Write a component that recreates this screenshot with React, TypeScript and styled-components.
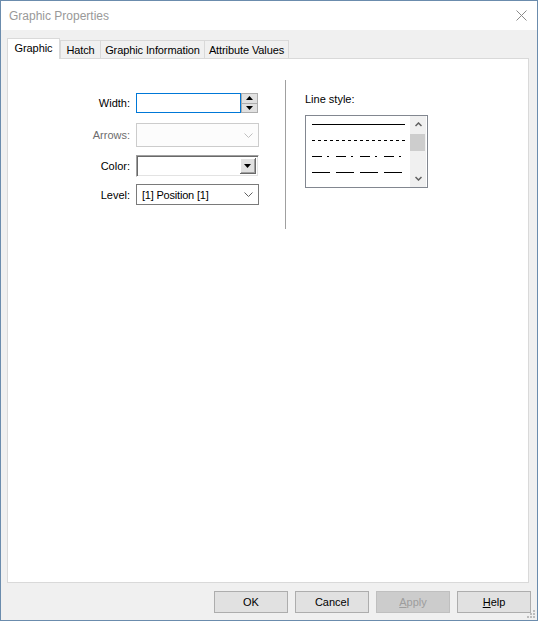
import styled, { createGlobalStyle } from 'styled-components';

const GlobalStyle = createGlobalStyle`
  body {
    margin: 0;
    background: #ffffff;
  }
`;

const Window = styled.div`
  position: relative;
  width: 538px;
  height: 621px;
  box-sizing: border-box;
  border: 1px solid #6b8cad;
  display: flex;
  flex-direction: column;
  background: #f0f0f0;
  font-family: 'Liberation Sans', Arial, sans-serif;
  font-size: 11px;
  color: #000;
`;

const TitleBar = styled.div`
  height: 29px;
  flex-shrink: 0;
  background: #ffffff;
  display: flex;
  align-items: center;
  justify-content: space-between;
  padding: 0 10px 0 8px;
  color: #999999;
  font-size: 12px;
`;

const CloseIcon = styled.svg`
  width: 11px;
  height: 11px;
`;

const Body = styled.div`
  flex: 1;
  display: flex;
  flex-direction: column;
  padding: 7px 6px 7px 6px;
`;

const TabRow = styled.div`
  display: flex;
  align-items: flex-end;
  height: 22px;
  margin-bottom: -1px;
  position: relative;
  z-index: 1;
`;

const Tab = styled.div<{ $active?: boolean; $width: number }>`
  box-sizing: border-box;
  width: ${(p) => p.$width}px;
  height: ${(p) => (p.$active ? 21 : 18)}px;
  margin-bottom: ${(p) => (p.$active ? 0 : 1)}px;
  margin-left: -1px;
  border: 1px solid #d9d9d9;
  border-bottom: none;
  background: ${(p) => (p.$active ? '#ffffff' : '#f0f0f0')};
  display: flex;
  align-items: center;
  justify-content: center;
  padding-bottom: ${(p) => (p.$active ? 3 : 0)}px;
  letter-spacing: -0.1px;

  &:first-child {
    margin-left: 0;
    margin-right: 1px;
  }
`;

const Panel = styled.div`
  height: 525px;
  box-sizing: border-box;
  margin-right: 2px;
  background: #ffffff;
  border: 1px solid #d9d9d9;
  display: flex;
  align-items: flex-start;
  padding-top: 21px;
`;

const LeftCol = styled.div`
  width: 277px;
  padding-top: 13px;
  display: flex;
  flex-direction: column;
`;

const FieldRow = styled.div<{ $mt: number; $h: number }>`
  display: grid;
  grid-template-columns: 122px 123px;
  column-gap: 6px;
  align-items: center;
  height: ${(p) => p.$h}px;
  margin-top: ${(p) => p.$mt}px;
`;

const Label = styled.label<{ $disabled?: boolean }>`
  text-align: right;
  color: ${(p) => (p.$disabled ? '#6d6d6d' : '#000')};
`;

const SpinBox = styled.div`
  display: flex;
  height: 20px;
`;

const TextInput = styled.div`
  box-sizing: border-box;
  width: 105px;
  height: 20px;
  border: 1px solid #0078d7;
  background: #fff;
`;

const SpinButtons = styled.div`
  width: 17px;
  display: flex;
  flex-direction: column;
`;

const SpinButton = styled.div`
  flex: 1;
  box-sizing: border-box;
  background: #e1e1e1;
  border: 1px solid #adadad;
  display: flex;
  align-items: center;
  justify-content: center;

  & + & {
    border-top: none;
  }
`;

const Combo = styled.div<{ $disabled?: boolean; $h: number }>`
  box-sizing: border-box;
  height: ${(p) => p.$h}px;
  border: 1px solid ${(p) => (p.$disabled ? '#cccccc' : '#7a7a7a')};
  background: ${(p) => (p.$disabled ? '#fcfcfc' : '#fff')};
  display: flex;
  align-items: center;
  justify-content: space-between;
  padding: 0 5px 0 5px;
  letter-spacing: -0.2px;
`;

const SunkenCombo = styled.div`
  box-sizing: border-box;
  height: 22px;
  border-top: 1px solid #a0a0a0;
  border-left: 1px solid #a0a0a0;
  border-right: 1px solid #ffffff;
  border-bottom: 1px solid #ffffff;
  box-shadow: inset 1px 1px 0 #696969, inset -1px -1px 0 #e3e3e3;
  background: #fff;
  display: flex;
  justify-content: flex-end;
  padding: 2px 2px 2px 2px;
`;

const DropButton = styled.div`
  width: 16px;
  box-sizing: border-box;
  background: #e1e1e1;
  border-right: 1px solid #696969;
  border-bottom: 1px solid #696969;
  box-shadow: inset 1px 1px 0 #ffffff, inset -1px -1px 0 #a0a0a0;
  display: flex;
  align-items: center;
  justify-content: center;
`;

const Separator = styled.div`
  width: 1px;
  height: 149px;
  background: #a0a0a0;
`;

const RightCol = styled.div`
  padding: 13px 0 0 19px;
  display: flex;
  flex-direction: column;
`;

const SmallLabel = styled.div`
  line-height: 13px;
  margin-bottom: 9px;
`;

const ListBox = styled.div`
  box-sizing: border-box;
  width: 123px;
  height: 73px;
  border: 1px solid #828790;
  display: flex;
`;

const ListItems = styled.div`
  flex: 1;
  display: flex;
  flex-direction: column;
`;

const LineItem = styled.svg`
  width: 93px;
  height: 16px;
  margin-left: 6px;
  display: block;
`;

const ScrollBar = styled.div`
  width: 16px;
  background: #f0f0f0;
  display: flex;
  flex-direction: column;
  margin-right: 1px;
`;

const ScrollArrow = styled.div`
  height: 17px;
  display: flex;
  align-items: center;
  justify-content: center;
`;

const ScrollTrack = styled.div`
  flex: 1;
`;

const Thumb = styled.div`
  width: 15px;
  height: 17px;
  margin-top: 1px;
  background: #cdcdcd;
`;

const Footer = styled.div`
  display: flex;
  justify-content: flex-end;
  gap: 7px;
  margin-top: 8px;
`;

const Button = styled.button`
  width: 74px;
  height: 22px;
  box-sizing: border-box;
  border: 1px solid #adadad;
  background: #e1e1e1;
  font-family: inherit;
  font-size: 11px;
  color: #000;
  padding: 0;

  &:disabled {
    background: #cccccc;
    border-color: #bfbfbf;
    color: #9d9d9d;
  }

  u {
    text-decoration: underline;
  }
`;

const Grip = styled.svg`
  position: absolute;
  right: 1px;
  bottom: 1px;
  width: 10px;
  height: 10px;
`;

const Chevron = ({ up, color }: { up?: boolean; color: string }) => (
  <svg width="9" height="5" viewBox="0 0 9 5">
    <polyline
      points={up ? '0.5,4.5 4.5,0.5 8.5,4.5' : '0.5,0.5 4.5,4.5 8.5,0.5'}
      fill="none"
      stroke={color}
      strokeWidth="1"
    />
  </svg>
);

const ScrollChevron = ({ up }: { up?: boolean }) => (
  <svg width="7" height="5" viewBox="0 0 7 5">
    <polyline
      points={up ? '0.5,4 3.5,1 6.5,4' : '0.5,1 3.5,4 6.5,1'}
      fill="none"
      stroke="#606060"
      strokeWidth="1.5"
    />
  </svg>
);

const Triangle = ({ up, w = 7 }: { up?: boolean; w?: number }) => (
  <svg width={w} height={Math.ceil(w / 2)} viewBox={`0 0 ${w} ${Math.ceil(w / 2)}`}>
    <polygon
      points={
        up
          ? `0,${Math.ceil(w / 2)} ${w},${Math.ceil(w / 2)} ${w / 2},0`
          : `0,0 ${w},0 ${w / 2},${Math.ceil(w / 2)}`
      }
      fill="#000"
    />
  </svg>
);

const lineStyles = ['', '3 3', '10 5 2 7', '18 6'];

function App() {
  return (
    <>
      <GlobalStyle />
      <Window>
        <TitleBar>
          <span>Graphic Properties</span>
          <CloseIcon viewBox="0 0 11 11">
            <path d="M0.5 0.5 L10.5 10.5 M10.5 0.5 L0.5 10.5" stroke="#8a8a8a" strokeWidth="1" />
          </CloseIcon>
        </TitleBar>
        <Body>
          <TabRow>
            <Tab $active $width={53}>Graphic</Tab>
            <Tab $width={41}>Hatch</Tab>
            <Tab $width={105}>Graphic Information</Tab>
            <Tab $width={85}>Attribute Values</Tab>
          </TabRow>
          <Panel>
            <LeftCol>
              <FieldRow $mt={0} $h={20}>
                <Label>Width:</Label>
                <SpinBox>
                  <TextInput />
                  <SpinButtons>
                    <SpinButton>
                      <Triangle up w={7} />
                    </SpinButton>
                    <SpinButton>
                      <Triangle w={7} />
                    </SpinButton>
                  </SpinButtons>
                </SpinBox>
              </FieldRow>
              <FieldRow $mt={10} $h={24}>
                <Label $disabled>Arrows:</Label>
                <Combo $disabled $h={24}>
                  <span />
                  <Chevron color="#bfbfbf" />
                </Combo>
              </FieldRow>
              <FieldRow $mt={8} $h={22}>
                <Label>Color:</Label>
                <SunkenCombo>
                  <DropButton>
                    <Triangle w={7} />
                  </DropButton>
                </SunkenCombo>
              </FieldRow>
              <FieldRow $mt={7} $h={21}>
                <Label>Level:</Label>
                <Combo $h={21}>
                  <span>[1] Position [1]</span>
                  <Chevron color="#606060" />
                </Combo>
              </FieldRow>
            </LeftCol>
            <Separator />
            <RightCol>
              <SmallLabel>Line style:</SmallLabel>
              <ListBox>
                <ListItems>
                  {lineStyles.map((dash, i) => (
                    <LineItem key={i} viewBox="0 0 93 16">
                      <line
                        x1="0"
                        y1="8.5"
                        x2="93"
                        y2="8.5"
                        stroke="#000"
                        strokeWidth="1"
                        strokeDasharray={dash || undefined}
                      />
                    </LineItem>
                  ))}
                </ListItems>
                <ScrollBar>
                  <ScrollArrow>
                    <ScrollChevron up />
                  </ScrollArrow>
                  <ScrollTrack>
                    <Thumb />
                  </ScrollTrack>
                  <ScrollArrow>
                    <ScrollChevron />
                  </ScrollArrow>
                </ScrollBar>
              </ListBox>
            </RightCol>
          </Panel>
          <Footer>
            <Button>OK</Button>
            <Button>Cancel</Button>
            <Button disabled>
              <u>A</u>pply
            </Button>
            <Button>
              <u>H</u>elp
            </Button>
          </Footer>
        </Body>
        <Grip viewBox="0 0 10 10">
          <rect x="7" y="1" width="2" height="2" fill="#bcbcbc" />
          <rect x="4" y="4" width="2" height="2" fill="#bcbcbc" />
          <rect x="7" y="4" width="2" height="2" fill="#bcbcbc" />
          <rect x="1" y="7" width="2" height="2" fill="#bcbcbc" />
          <rect x="4" y="7" width="2" height="2" fill="#bcbcbc" />
          <rect x="7" y="7" width="2" height="2" fill="#bcbcbc" />
        </Grip>
      </Window>
    </>
  );
}

export default App;
